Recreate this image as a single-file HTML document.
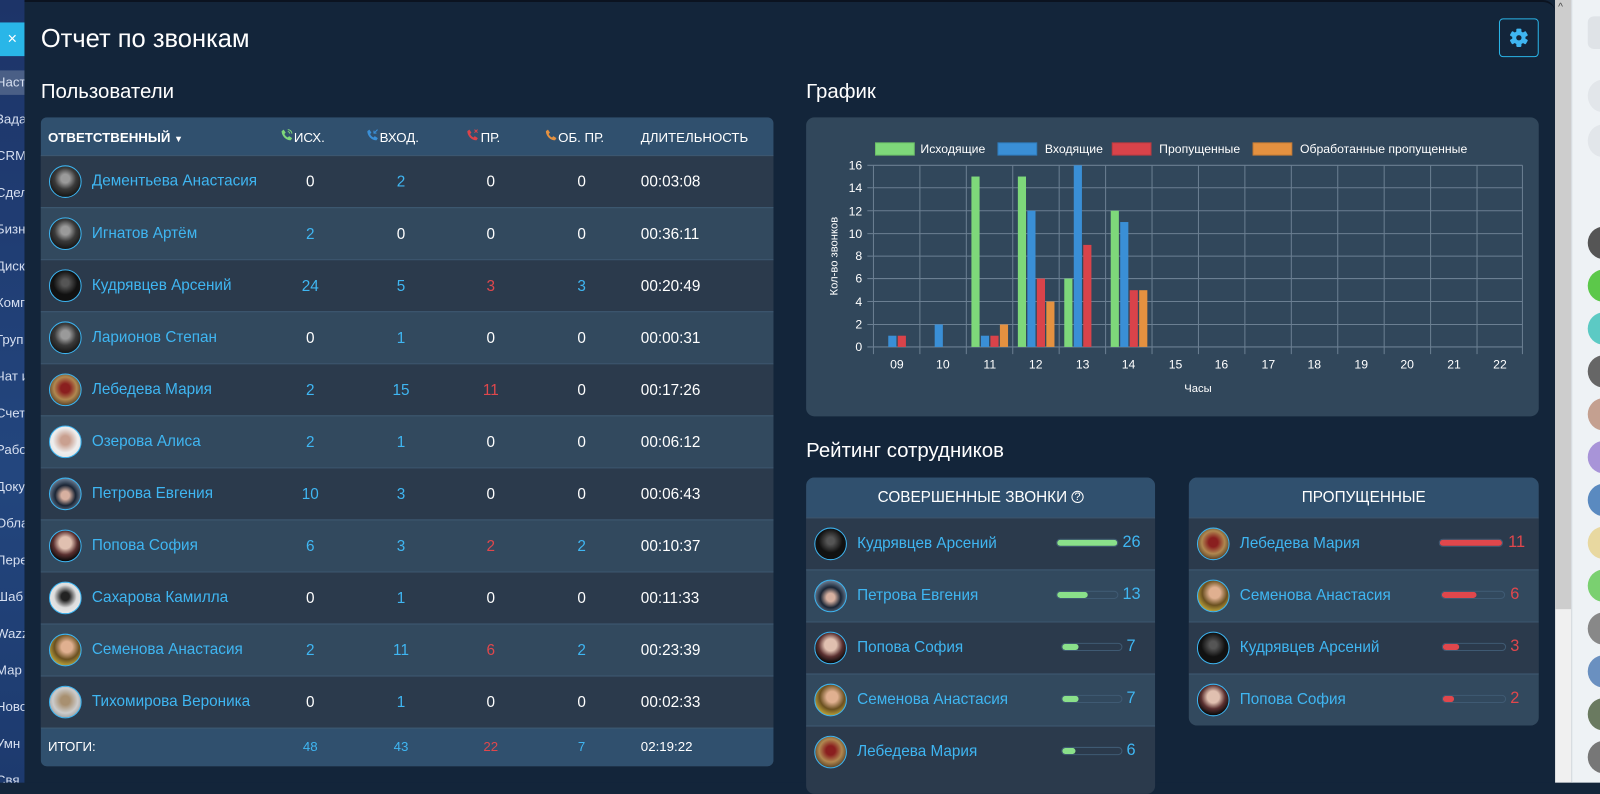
<!DOCTYPE html>
<html><head><meta charset="utf-8">
<style>
*{box-sizing:border-box;margin:0;padding:0}
body{width:1600px;height:767px;overflow:hidden;background:#13253a;font-family:"Liberation Sans",sans-serif;position:relative;color:#fff}
#w{position:absolute;left:0;top:0;width:1568px;height:752px;transform:scale(1.0204);transform-origin:0 0}
.abs{position:absolute}
#side{left:0;top:0;width:24px;height:767px;background:linear-gradient(180deg,#1d3468,#23467e 60%,#1d3a6e);overflow:hidden}
#side .it{position:absolute;left:-4px;font-size:13px;color:#d6dff0;white-space:nowrap}
#main{left:24px;top:0;width:1500px;height:767px;background:#13253a;border-top-right-radius:12px;border-top:2px solid #0b1320}
.av{position:absolute;width:32px;height:32px;border-radius:50%;border:1.5px solid #3db4f0;background:radial-gradient(circle at 50% 40%,#9a9a9a 0 18%,#3a3a3a 45%,#111 80%)}
.row{position:absolute;left:40px;width:718px;height:51px;border-top:1px solid #3f5a73}
.row .nm{position:absolute;left:50px;top:16px;font-size:15px;color:#3fb6f2;white-space:nowrap}
.row .c{position:absolute;width:60px;text-align:center;top:17px;font-size:15px}
.row .d{position:absolute;left:588px;top:17px;font-size:15px}
.cy{color:#3fb6f2}.rd{color:#e0474c}
.hd{position:absolute;font-size:13px;top:12px;white-space:nowrap}
.card{position:absolute;border-radius:8px;overflow:hidden;background:#2b3a4c}
.card .h{height:39px;background:#30506e;text-align:center;font-size:15px;line-height:39px}
.rr{position:relative;height:51px;border-top:1px solid #3f5a73}
.rr .av{left:8px;top:9px}
.rr .nm{position:absolute;left:50px;top:16px;font-size:15px;color:#3fb6f2;white-space:nowrap}
.tr{position:absolute;top:20px;height:8px;border-radius:4px;border:1px solid #3f5a73;overflow:hidden}
.tr i{display:block;height:100%;border-radius:4px}
.val{position:absolute;top:15px;font-size:16px}
</style></head><body><div id="w">
<div id="side" class="abs">
<div class="abs" style="left:0;top:22px;width:24px;height:33px;background:#29b6e8;color:#fff;font-size:16px;line-height:33px;text-align:center">×</div>
<div class="abs" style="left:0;top:69px;width:24px;height:24px;background:#4a5f86"></div>
<div class="it" style="top:73px">Наст</div><div class="it" style="top:109px">Зада</div><div class="it" style="top:145px">CRM</div><div class="it" style="top:181px">Сдел</div><div class="it" style="top:217px">Бизн</div><div class="it" style="top:253px">Диск</div><div class="it" style="top:289px">Комп</div><div class="it" style="top:325px">Груп</div><div class="it" style="top:361px">Чат и</div><div class="it" style="top:397px">Счет</div><div class="it" style="top:433px">Рабо</div><div class="it" style="top:469px">Доку</div><div class="it" style="top:505px">Обла</div><div class="it" style="top:541px">Пере</div><div class="it" style="top:577px">Шаб</div><div class="it" style="top:613px">Wazz</div><div class="it" style="top:649px">Мар</div><div class="it" style="top:685px">Ново</div><div class="it" style="top:721px">Умн</div><div class="it" style="top:757px">Свя</div>
</div>
<div id="main" class="abs"></div>

<div class="abs" style="left:40px;top:24px;font-size:25px">Отчет по звонкам</div>
<div class="abs" style="left:1469px;top:18px;width:39px;height:38px;border:1px solid #2ab5e8;border-radius:4px">
<svg width="37" height="36" viewBox="0 0 37 36"><g transform="translate(18.5,18)" fill="#3fb6f2"><circle r="6.5"/><g id="t"><rect x="-2.5" y="-9" width="5" height="5" rx="1"/></g><use href="#t" transform="rotate(60)"/><use href="#t" transform="rotate(120)"/><use href="#t" transform="rotate(180)"/><use href="#t" transform="rotate(240)"/><use href="#t" transform="rotate(300)"/><circle r="2.6" fill="#13253a"/></g></svg></div>

<div class="abs" style="left:40px;top:79px;font-size:20px">Пользователи</div>

<div class="abs" style="left:40px;top:115px;width:718px;height:636px;border-radius:6px;overflow:hidden;background:#2b3a4c">
<div class="abs" style="left:0;top:0;width:718px;height:37px;background:#30506e"></div>
<div class="abs" style="left:0;top:598px;width:718px;height:38px;background:#30506e;border-top:1px solid #3f5a73"></div>
</div>
<div class="hd" style="left:47px;top:127px;font-weight:bold">ОТВЕТСТВЕННЫЙ <span style="font-size:9px">▼</span></div>
<svg class="abs" style="left:275px;top:126px" width="12" height="13" viewBox="0 0 12 13"><path d="M1 2.5 3 1l2 3-1.3 1.3c.7 1.6 1.8 2.7 3.3 3.4L8.3 7.4l3 2L10 11.5C5 11.5 1 7 1 2.5z" fill="#7ed87a"/><path d="M7 1a4 4 0 0 1 4 4M7 3a2 2 0 0 1 2 2" stroke="#7ed87a" fill="none"/></svg>
<div class="hd" style="left:288px;top:127px">ИСХ.</div>
<svg class="abs" style="left:359px;top:126px" width="12" height="13" viewBox="0 0 12 13"><path d="M1 2.5 3 1l2 3-1.3 1.3c.7 1.6 1.8 2.7 3.3 3.4L8.3 7.4l3 2L10 11.5C5 11.5 1 7 1 2.5z" fill="#3a8fd6"/><path d="M11 1 7.5 4.5M7.5 2v2.5H10" stroke="#3a8fd6" fill="none"/></svg>
<div class="hd" style="left:372px;top:127px">ВХОД.</div>
<svg class="abs" style="left:457px;top:126px" width="12" height="13" viewBox="0 0 12 13"><path d="M1 2.5 3 1l2 3-1.3 1.3c.7 1.6 1.8 2.7 3.3 3.4L8.3 7.4l3 2L10 11.5C5 11.5 1 7 1 2.5z" fill="#d9434a"/><path d="M8 1l3 3M11 1 8 4" stroke="#d9434a" fill="none"/></svg>
<div class="hd" style="left:471px;top:127px">ПР.</div>
<svg class="abs" style="left:534px;top:126px" width="12" height="13" viewBox="0 0 12 13"><path d="M1 2.5 3 1l2 3-1.3 1.3c.7 1.6 1.8 2.7 3.3 3.4L8.3 7.4l3 2L10 11.5C5 11.5 1 7 1 2.5z" fill="#e49140"/></svg>
<div class="hd" style="left:547px;top:127px">ОБ. ПР.</div>
<div class="hd" style="left:628px;top:127px">ДЛИТЕЛЬНОСТЬ</div>

<div class="row" style="top:152px;background:#2b3a4c"><div class="av" style="left:8px;top:9px"></div><div class="nm">Дементьева Анастасия</div><div class="c" style="left:234px">0</div><div class="c cy" style="left:323px">2</div><div class="c" style="left:411px">0</div><div class="c" style="left:500px">0</div><div class="d">00:03:08</div></div>
<div class="row" style="top:203px;background:#32495e"><div class="av" style="left:8px;top:9px"></div><div class="nm">Игнатов Артём</div><div class="c cy" style="left:234px">2</div><div class="c" style="left:323px">0</div><div class="c" style="left:411px">0</div><div class="c" style="left:500px">0</div><div class="d">00:36:11</div></div>
<div class="row" style="top:254px;background:#2b3a4c"><div class="av" style="left:8px;top:9px;background:radial-gradient(circle at 50% 40%,#555 0 15%,#111 50%)"></div><div class="nm">Кудрявцев Арсений</div><div class="c cy" style="left:234px">24</div><div class="c cy" style="left:323px">5</div><div class="c rd" style="left:411px">3</div><div class="c cy" style="left:500px">3</div><div class="d">00:20:49</div></div>
<div class="row" style="top:305px;background:#32495e"><div class="av" style="left:8px;top:9px"></div><div class="nm">Ларионов Степан</div><div class="c" style="left:234px">0</div><div class="c cy" style="left:323px">1</div><div class="c" style="left:411px">0</div><div class="c" style="left:500px">0</div><div class="d">00:00:31</div></div>
<div class="row" style="top:356px;background:#2b3a4c"><div class="av" style="left:8px;top:9px;background:radial-gradient(circle at 50% 45%,#8a1f1f 0 20%,#b08850 50%,#3a2a1a 85%)"></div><div class="nm">Лебедева Мария</div><div class="c cy" style="left:234px">2</div><div class="c cy" style="left:323px">15</div><div class="c rd" style="left:411px">11</div><div class="c" style="left:500px">0</div><div class="d">00:17:26</div></div>
<div class="row" style="top:407px;background:#32495e"><div class="av" style="left:8px;top:9px;background:radial-gradient(circle at 50% 45%,#c9a090 0 20%,#eee 55%,#ddd)"></div><div class="nm">Озерова Алиса</div><div class="c cy" style="left:234px">2</div><div class="c cy" style="left:323px">1</div><div class="c" style="left:411px">0</div><div class="c" style="left:500px">0</div><div class="d">00:06:12</div></div>
<div class="row" style="top:458px;background:#2b3a4c"><div class="av" style="left:8px;top:9px;background:radial-gradient(circle at 50% 55%,#d7b0a0 0 18%,#1a2535 45%,#8aa0b8 85%)"></div><div class="nm">Петрова Евгения</div><div class="c cy" style="left:234px">10</div><div class="c cy" style="left:323px">3</div><div class="c" style="left:411px">0</div><div class="c" style="left:500px">0</div><div class="d">00:06:43</div></div>
<div class="row" style="top:509px;background:#32495e"><div class="av" style="left:8px;top:9px;background:radial-gradient(circle at 50% 40%,#e0c0b0 0 25%,#5a3030 50%,#0a0a0a 75%)"></div><div class="nm">Попова София</div><div class="c cy" style="left:234px">6</div><div class="c cy" style="left:323px">3</div><div class="c rd" style="left:411px">2</div><div class="c cy" style="left:500px">2</div><div class="d">00:10:37</div></div>
<div class="row" style="top:560px;background:#2b3a4c"><div class="av" style="left:8px;top:9px;background:radial-gradient(circle at 50% 45%,#222 0 18%,#ddd 50%,#f4f4f4)"></div><div class="nm">Сахарова Камилла</div><div class="c" style="left:234px">0</div><div class="c cy" style="left:323px">1</div><div class="c" style="left:411px">0</div><div class="c" style="left:500px">0</div><div class="d">00:11:33</div></div>
<div class="row" style="top:611px;background:#32495e"><div class="av" style="left:8px;top:9px;background:radial-gradient(circle at 55% 40%,#e0b090 0 22%,#6a5020 50%,#c8b040 80%)"></div><div class="nm">Семенова Анастасия</div><div class="c cy" style="left:234px">2</div><div class="c cy" style="left:323px">11</div><div class="c rd" style="left:411px">6</div><div class="c cy" style="left:500px">2</div><div class="d">00:23:39</div></div>
<div class="row" style="top:662px;background:#2b3a4c"><div class="av" style="left:8px;top:9px;background:radial-gradient(circle at 50% 45%,#a89070 0 20%,#ccc 55%,#777)"></div><div class="nm">Тихомирова Вероника</div><div class="c" style="left:234px">0</div><div class="c cy" style="left:323px">1</div><div class="c" style="left:411px">0</div><div class="c" style="left:500px">0</div><div class="d">00:02:33</div></div>
<div class="abs" style="left:47px;top:724px;font-size:13px">ИТОГИ:</div>
<div class="abs cy" style="left:274px;width:60px;text-align:center;top:724px;font-size:13px">48</div>
<div class="abs cy" style="left:363px;width:60px;text-align:center;top:724px;font-size:13px">43</div>
<div class="abs rd" style="left:451px;width:60px;text-align:center;top:724px;font-size:13px">22</div>
<div class="abs cy" style="left:540px;width:60px;text-align:center;top:724px;font-size:13px">7</div>
<div class="abs" style="left:628px;top:724px;font-size:13px">02:19:22</div>

<div class="abs" style="left:790px;top:79px;font-size:20px">График</div>
<div class="abs" style="left:790px;top:115px;width:718px;height:293px;background:#31475b;border-radius:8px"></div>
<svg class="abs" style="left:790px;top:115px" width="718" height="293" font-family="Liberation Sans, sans-serif" font-size="12" fill="#fff">
<rect x="68" y="25" width="38" height="12" fill="#7ed87a" stroke="#6cc068"/><text x="112" y="35">Исходящие</text>
<rect x="188" y="25" width="38" height="12" fill="#3a8fd6" stroke="#2f7bbb"/><text x="234" y="35">Входящие</text>
<rect x="300" y="25" width="38" height="12" fill="#d9434a" stroke="#bb3a40"/><text x="346" y="35">Пропущенные</text>
<rect x="438" y="25" width="38" height="12" fill="#e49140" stroke="#c57b34"/><text x="484" y="35">Обработанные пропущенные</text>
<g stroke="#6b7f92" stroke-width="1">
<line x1="60" y1="47" x2="702" y2="47"/><line x1="60" y1="69" x2="702" y2="69"/><line x1="60" y1="91.5" x2="702" y2="91.5"/><line x1="60" y1="114" x2="702" y2="114"/><line x1="60" y1="136" x2="702" y2="136"/><line x1="60" y1="158" x2="702" y2="158"/><line x1="60" y1="180.5" x2="702" y2="180.5"/><line x1="60" y1="203" x2="702" y2="203"/><line x1="60" y1="225" x2="702" y2="225"/>
</g>
<g stroke="#6b7f92"><line x1="66" y1="47" x2="66" y2="232"/><line x1="111.5" y1="47" x2="111.5" y2="232"/><line x1="157" y1="47" x2="157" y2="232"/><line x1="202.5" y1="47" x2="202.5" y2="232"/><line x1="248" y1="47" x2="248" y2="232"/><line x1="293.5" y1="47" x2="293.5" y2="232"/><line x1="339" y1="47" x2="339" y2="232"/><line x1="384.5" y1="47" x2="384.5" y2="232"/><line x1="430" y1="47" x2="430" y2="232"/><line x1="475.5" y1="47" x2="475.5" y2="232"/><line x1="521" y1="47" x2="521" y2="232"/><line x1="566.5" y1="47" x2="566.5" y2="232"/><line x1="612" y1="47" x2="612" y2="232"/><line x1="657.5" y1="47" x2="657.5" y2="232"/><line x1="702" y1="47" x2="702" y2="232"/></g>
<g text-anchor="end" font-size="12"><text x="55" y="51">16</text><text x="55" y="73">14</text><text x="55" y="96">12</text><text x="55" y="118">10</text><text x="55" y="140">8</text><text x="55" y="162">6</text><text x="55" y="185">4</text><text x="55" y="207">2</text><text x="55" y="229">0</text></g>
<g text-anchor="middle" font-size="12"><text x="89" y="246">09</text><text x="134" y="246">10</text><text x="180" y="246">11</text><text x="225" y="246">12</text><text x="271" y="246">13</text><text x="316" y="246">14</text><text x="362" y="246">15</text><text x="407" y="246">16</text><text x="453" y="246">17</text><text x="498" y="246">18</text><text x="544" y="246">19</text><text x="589" y="246">20</text><text x="635" y="246">21</text><text x="680" y="246">22</text>
<text x="384" y="269" font-size="11">Часы</text>
<text transform="translate(31,136) rotate(-90)" font-size="11">Кол-во звонков</text></g>
<g>
<rect x="80.5" y="214" width="8" height="11" fill="#3a8fd6"/><rect x="89.8" y="214" width="8" height="11" fill="#d9434a"/>
<rect x="126" y="203" width="8" height="22" fill="#3a8fd6"/>
<rect x="162" y="58" width="8" height="167" fill="#7ed87a"/><rect x="171.3" y="214" width="8" height="11" fill="#3a8fd6"/><rect x="180.6" y="214" width="8" height="11" fill="#d9434a"/><rect x="189.9" y="203" width="8" height="22" fill="#e49140"/>
<rect x="207.5" y="58" width="8" height="167" fill="#7ed87a"/><rect x="216.8" y="91.5" width="8" height="133.5" fill="#3a8fd6"/><rect x="226.1" y="158" width="8" height="67" fill="#d9434a"/><rect x="235.4" y="180.5" width="8" height="44.5" fill="#e49140"/>
<rect x="253" y="158" width="8" height="67" fill="#7ed87a"/><rect x="262.3" y="47" width="8" height="178" fill="#3a8fd6"/><rect x="271.6" y="125" width="8" height="100" fill="#d9434a"/>
<rect x="298.5" y="91.5" width="8" height="133.5" fill="#7ed87a"/><rect x="307.8" y="102.6" width="8" height="122.4" fill="#3a8fd6"/><rect x="317.1" y="169.4" width="8" height="55.6" fill="#d9434a"/><rect x="326.4" y="169.4" width="8" height="55.6" fill="#e49140"/>
</g>
</svg>

<div class="abs" style="left:790px;top:431px;font-size:20px">Рейтинг сотрудников</div>
<div class="card" style="left:790px;top:468px;width:342px;height:310px">
<div class="h">СОВЕРШЕННЫЕ ЗВОНКИ <span style="font-size:11px;border:1px solid #fff;border-radius:50%;display:inline-block;width:12px;height:12px;line-height:11px;vertical-align:2px">?</span></div>
<div class="rr" style="background:#2b3a4c"><div class="av" style="background:radial-gradient(circle at 50% 40%,#555 0 15%,#111 50%)"></div><div class="nm">Кудрявцев Арсений</div><div class="tr" style="left:245px;width:61px"><i style="width:100%;background:#8ae08a"></i></div><div class="val cy" style="left:310px">26</div></div>
<div class="rr" style="background:#32495e"><div class="av" style="background:radial-gradient(circle at 50% 55%,#d7b0a0 0 18%,#1a2535 45%,#8aa0b8 85%)"></div><div class="nm">Петрова Евгения</div><div class="tr" style="left:245px;width:61px"><i style="width:50%;background:#8ae08a"></i></div><div class="val cy" style="left:310px">13</div></div>
<div class="rr" style="background:#2b3a4c"><div class="av" style="background:radial-gradient(circle at 50% 40%,#e0c0b0 0 25%,#5a3030 50%,#0a0a0a 75%)"></div><div class="nm">Попова София</div><div class="tr" style="left:250px;width:60px"><i style="width:27%;background:#8ae08a"></i></div><div class="val cy" style="left:314px">7</div></div>
<div class="rr" style="background:#32495e"><div class="av" style="background:radial-gradient(circle at 55% 40%,#e0b090 0 22%,#6a5020 50%,#c8b040 80%)"></div><div class="nm">Семенова Анастасия</div><div class="tr" style="left:250px;width:60px"><i style="width:27%;background:#8ae08a"></i></div><div class="val cy" style="left:314px">7</div></div>
<div class="rr" style="background:#2b3a4c"><div class="av" style="background:radial-gradient(circle at 50% 45%,#8a1f1f 0 20%,#b08850 50%,#3a2a1a 85%)"></div><div class="nm">Лебедева Мария</div><div class="tr" style="left:250px;width:60px"><i style="width:23%;background:#8ae08a"></i></div><div class="val cy" style="left:314px">6</div></div>
</div>
<div class="card" style="left:1165px;top:468px;width:343px;height:243px">
<div class="h">ПРОПУЩЕННЫЕ</div>
<div class="rr" style="background:#2b3a4c"><div class="av" style="background:radial-gradient(circle at 50% 45%,#8a1f1f 0 20%,#b08850 50%,#3a2a1a 85%)"></div><div class="nm">Лебедева Мария</div><div class="tr" style="left:245px;width:63px"><i style="width:100%;background:#e0474c"></i></div><div class="val rd" style="left:313px">11</div></div>
<div class="rr" style="background:#32495e"><div class="av" style="background:radial-gradient(circle at 55% 40%,#e0b090 0 22%,#6a5020 50%,#c8b040 80%)"></div><div class="nm">Семенова Анастасия</div><div class="tr" style="left:247px;width:63px"><i style="width:56%;background:#e0474c"></i></div><div class="val rd" style="left:315px">6</div></div>
<div class="rr" style="background:#2b3a4c"><div class="av" style="background:radial-gradient(circle at 50% 40%,#555 0 15%,#111 50%)"></div><div class="nm">Кудрявцев Арсений</div><div class="tr" style="left:248px;width:63px"><i style="width:27%;background:#e0474c"></i></div><div class="val rd" style="left:315px">3</div></div>
<div class="rr" style="background:#32495e"><div class="av" style="background:radial-gradient(circle at 50% 40%,#e0c0b0 0 25%,#5a3030 50%,#0a0a0a 75%)"></div><div class="nm">Попова София</div><div class="tr" style="left:248px;width:63px"><i style="width:18%;background:#e0474c"></i></div><div class="val rd" style="left:315px">2</div></div>
</div>

<div class="abs" style="left:1524px;top:0;width:16px;height:767px;background:#f0f0f0"></div>
<div class="abs" style="left:1524px;top:0;width:16px;height:597px;background:#cdcdcd"></div>
<div class="abs" style="left:1527px;top:2px;font-size:10px;color:#444">^</div>
<div class="abs" style="left:1540px;top:0;width:60px;height:767px;background:#eef2f5;border-left:1px solid #dde3e8"></div>
<div class="abs" style="left:1556px;top:16px;width:44px;height:32px;background:#dfe3e7;border-radius:6px"></div>
<div class="abs" style="left:1556px;top:78px;width:30px;height:32px;background:#e2e6ea;border-radius:50%"></div>
<div class="abs" style="left:1556px;top:122px;width:30px;height:32px;background:#e2e6ea;border-radius:50%"></div>
<div class="abs" style="left:1556px;top:222px;width:32px;height:32px;border-radius:50%;background:#555"></div>
<div class="abs" style="left:1556px;top:264px;width:32px;height:32px;border-radius:50%;background:#5cc84a"></div>
<div class="abs" style="left:1556px;top:306px;width:32px;height:32px;border-radius:50%;background:#5ccac4"></div>
<div class="abs" style="left:1556px;top:348px;width:32px;height:32px;border-radius:50%;background:#666"></div>
<div class="abs" style="left:1556px;top:390px;width:32px;height:32px;border-radius:50%;background:#c4a090"></div>
<div class="abs" style="left:1556px;top:432px;width:32px;height:32px;border-radius:50%;background:#a894d8"></div>
<div class="abs" style="left:1556px;top:474px;width:32px;height:32px;border-radius:50%;background:#5a8ac0"></div>
<div class="abs" style="left:1556px;top:516px;width:32px;height:32px;border-radius:50%;background:#e8d8a0"></div>
<div class="abs" style="left:1556px;top:558px;width:32px;height:32px;border-radius:50%;background:#7ad070"></div>
<div class="abs" style="left:1556px;top:600px;width:32px;height:32px;border-radius:50%;background:#888"></div>
<div class="abs" style="left:1556px;top:642px;width:32px;height:32px;border-radius:50%;background:#6a90c0"></div>
<div class="abs" style="left:1556px;top:684px;width:32px;height:32px;border-radius:50%;background:#6a7a60"></div>
<div class="abs" style="left:1556px;top:726px;width:32px;height:32px;border-radius:50%;background:#777"></div>
</div></body></html>
